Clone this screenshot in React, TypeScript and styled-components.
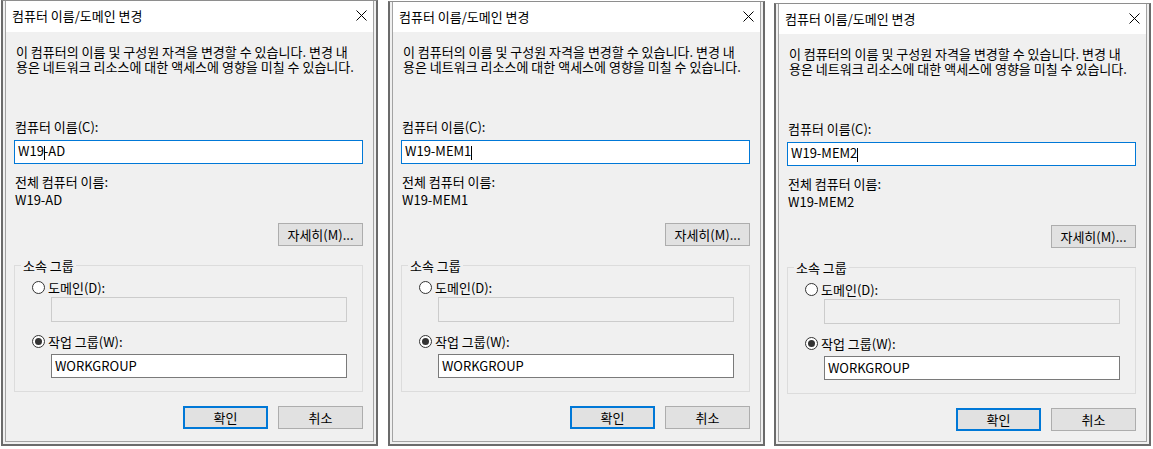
import React from "react";
import styled, { createGlobalStyle } from "styled-components";

const GlobalStyle = createGlobalStyle`
  html, body {
    margin: 0;
    padding: 0;
    background: #ffffff;
  }

  body {
    font-family: "Noto Sans CJK KR", "Noto Sans", sans-serif;
    font-size: 13px;
    color: #000000;
  }

  * {
    box-sizing: border-box;
  }
`;

const Screen = styled.div`
  display: flex;
  align-items: flex-start;
  width: 1153px;
  height: 449px;
  overflow: hidden;
  background: #ffffff;
`;

const Window = styled.div<{ $left: number; $top: number }>`
  flex: none;
  display: flex;
  flex-direction: column;
  width: 377px;
  height: ${(p) => 446 - p.$top}px;
  margin-left: ${(p) => p.$left}px;
  margin-top: ${(p) => p.$top}px;
  padding: 0 2px 2px;
  border: 2px solid #6b6b6b;
  border-top: 1px solid #8e8e8e;
  background: #f0f0f0;
`;

const Frame = styled.div`
  flex: 1;
  display: flex;
  flex-direction: column;
  border: 1px solid #a3a3a3;
  border-top: none;
`;

const TitleBar = styled.div<{ $height: number }>`
  flex: none;
  display: flex;
  align-items: center;
  justify-content: space-between;
  height: ${(p) => p.$height}px;
  padding: 0 6px 2px 6px;
  background: #ffffff;
  line-height: 15px;
  white-space: nowrap;
`;

const CloseIcon = styled.svg`
  display: block;
`;

const Body = styled.div`
  flex: 1;
  display: flex;
  flex-direction: column;
  padding: 12px 10px 0 8px;
  line-height: 15px;
  white-space: nowrap;
`;

const Description = styled.p`
  margin: 0;
  padding-left: 2px;
`;

const Label = styled.div<{ $gap: number }>`
  margin-top: ${(p) => p.$gap}px;
  padding-left: 1px;
`;

const TextBox = styled.div<{ $variant: "focus" | "normal" | "disabled"; $gap: number; $inset?: number }>`
  display: flex;
  align-items: center;
  height: ${(p) => (p.$variant === "disabled" ? 25 : 24)}px;
  margin: ${(p) => p.$gap}px ${(p) => (p.$inset ? 15 : 0)}px 0 ${(p) => p.$inset ?? 0}px;
  padding: 0 3px 1px;
  border: 1px solid
    ${(p) =>
      p.$variant === "focus" ? "#0078d7" : p.$variant === "disabled" ? "#cccccc" : "#7a7a7a"};
  background: ${(p) => (p.$variant === "disabled" ? "#f0f0f0" : "#ffffff")};
`;

const Caret = styled.span`
  display: inline-block;
  width: 1px;
  height: 14px;
  margin: 0 -1px 0 0;
  background: #000000;
  vertical-align: middle;
`;

const Button = styled.div<{ $default?: boolean }>`
  display: flex;
  align-items: center;
  justify-content: center;
  width: 85px;
  height: 23px;
  padding-bottom: 1px;
  border: ${(p) => (p.$default ? "2px solid #0078d7" : "1px solid #adadad")};
  background: #e1e1e1;
`;

const DetailsButton = styled(Button)`
  align-self: flex-end;
  margin-top: 16px;
`;

const Group = styled.fieldset`
  margin: 12px 0 0;
  padding: 0;
  min-width: 0;
  border: 1px solid #dcdcdc;
`;

const GroupLegend = styled.legend`
  margin-left: 6px;
  padding: 0 2px;
  line-height: 15px;
`;

const GroupContent = styled.div`
  display: flex;
  flex-direction: column;
  padding: 7px 0 13px;
`;

const RadioRow = styled.div<{ $gap: number }>`
  display: flex;
  align-items: center;
  gap: 3px;
  height: 15px;
  margin-top: ${(p) => p.$gap}px;
  padding-left: 17px;
`;

const Radio = styled.span<{ $checked?: boolean }>`
  flex: none;
  display: flex;
  align-items: center;
  justify-content: center;
  width: 13px;
  height: 13px;
  border: 1px solid #333333;
  border-radius: 50%;
  background: #ffffff;

  &::after {
    content: "";
    display: ${(p) => (p.$checked ? "block" : "none")};
    width: 7px;
    height: 7px;
    border-radius: 50%;
    background: #333333;
  }
`;

const ButtonRow = styled.div`
  display: flex;
  justify-content: flex-end;
  gap: 10px;
  margin-top: 14px;
`;

type DialogData = {
  name: string;
  caretAt: number;
  left: number;
  top: number;
  title: number;
};

const dialogs: DialogData[] = [
  { name: "W19-AD", caretAt: 3, left: 1, top: 0, title: 31 },
  { name: "W19-MEM1", caretAt: 8, left: 10, top: 1, title: 30 },
  { name: "W19-MEM2", caretAt: 8, left: 9, top: 3, title: 30 },
];

function Dialog({ data }: { data: DialogData }) {
  return (
    <Window $left={data.left} $top={data.top}>
      <Frame>
        <TitleBar $height={data.title}>
          <span>컴퓨터 이름/도메인 변경</span>
          <CloseIcon width="11" height="11" viewBox="0 0 11 11">
            <path d="M0.5 0.5L10.5 10.5M10.5 0.5L0.5 10.5" stroke="#000" strokeWidth="1" fill="none" />
          </CloseIcon>
        </TitleBar>
        <Body>
          <Description>
            이 컴퓨터의 이름 및 구성원 자격을 변경할 수 있습니다. 변경 내
            <br />
            용은 네트워크 리소스에 대한 액세스에 영향을 미칠 수 있습니다.
          </Description>
          <Label $gap={45}>컴퓨터 이름(C):</Label>
          <TextBox $variant="focus" $gap={6}>
            <span>
              {data.name.slice(0, data.caretAt)}
              <Caret />
              {data.name.slice(data.caretAt)}
            </span>
          </TextBox>
          <Label $gap={10}>전체 컴퓨터 이름:</Label>
          <Label $gap={3}>{data.name}</Label>
          <DetailsButton>자세히(M)...</DetailsButton>
          <Group>
            <GroupLegend>소속 그룹</GroupLegend>
            <GroupContent>
              <RadioRow $gap={0}>
                <Radio />
                <span>도메인(D):</span>
              </RadioRow>
              <TextBox $variant="disabled" $gap={2} $inset={36} />
              <RadioRow $gap={12}>
                <Radio $checked />
                <span>작업 그룹(W):</span>
              </RadioRow>
              <TextBox $variant="normal" $gap={5} $inset={36}>
                WORKGROUP
              </TextBox>
            </GroupContent>
          </Group>
          <ButtonRow>
            <Button $default>확인</Button>
            <Button>취소</Button>
          </ButtonRow>
        </Body>
      </Frame>
    </Window>
  );
}

export default function App() {
  return (
    <>
      <GlobalStyle />
      <Screen>
        {dialogs.map((d) => (
          <Dialog key={d.name} data={d} />
        ))}
      </Screen>
    </>
  );
}
